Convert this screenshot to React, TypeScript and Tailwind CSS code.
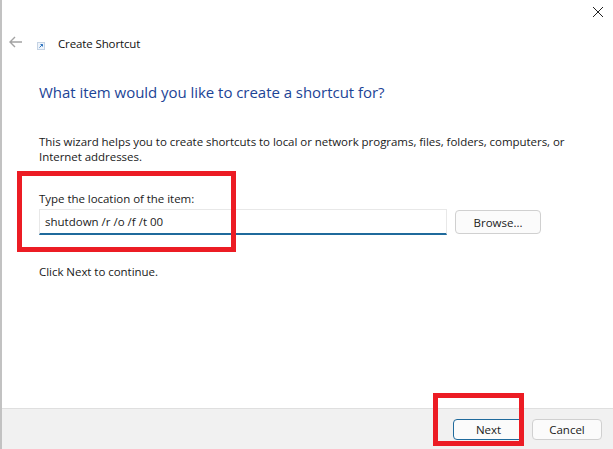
import React from "react";

export default function App() {
  return (
    <div className="relative w-[613px] h-[449px] overflow-hidden bg-white font-['Open_Sans','Noto_Sans',sans-serif] text-[12px] leading-[15px] text-[#1a1a1a] border-l-2 border-[#c2c2c2] flex flex-col">
      <div className="flex-1 flex flex-col">
        <div className="flex justify-end pt-[6px] pr-[9px] h-[30px]">
          <svg width="12" height="12" viewBox="0 0 12 12">
            <path d="M1 1L11 11M11 1L1 11" stroke="#222" strokeWidth="1" fill="none" />
          </svg>
        </div>
        <div className="flex items-center h-[26px] pl-[6px]">
          <svg width="16" height="14" viewBox="0 0 16 14" className="mt-[-2px]">
            <path d="M14 7H2M7 2L2 7L7 12" stroke="#a3a3a3" strokeWidth="1.4" fill="none" />
          </svg>
          <svg width="8" height="8" viewBox="0 0 8 8" className="ml-[13px] mt-[5px]">
            <rect x="0.5" y="0.5" width="7" height="7" fill="#eef4fb" stroke="#c5d3e4" />
            <path d="M2.5 5.5L5.5 2.5M3.5 2.5H5.5V4.5" stroke="#2f75c0" strokeWidth="1" fill="none" />
          </svg>
          <span className="ml-[13px] text-[11.5px] tracking-[-0.12px] text-[#111]">Create Shortcut</span>
        </div>
        <h1 className="ml-[37px] mt-[25px] text-[15px] leading-[22px] font-normal text-[#1c4496] tracking-[-0.04px]">
          What item would you like to create a shortcut for?
        </h1>
        <p className="ml-[37px] mt-[31px] w-[530px] text-[11.5px] tracking-[-0.04px]">
          This wizard helps you to create shortcuts to local or network programs, files, folders, computers, or Internet addresses.
        </p>
        <label className="block ml-[37px] mt-[27px] text-[11.5px] tracking-[-0.04px]">Type the location of the item:</label>
        <div className="ml-[37px] mt-[3px] flex items-start gap-[8px]">
          <div className="w-[408px] h-[26px] border border-[#e8e8e8] border-b-2 border-b-[#1f6a9c] pl-[5px] flex items-center text-[11.5px]">
            shutdown /r /o /f /t 00
          </div>
          <button className="w-[86px] h-[24px] mt-[1px] rounded-[4px] border border-[#d0d0d0] bg-[#fbfbfb] text-[11.5px] text-[#1a1a1a]">
            Browse...
          </button>
        </div>
        <p className="ml-[37px] mt-[29px] text-[11.5px] tracking-[-0.04px]">Click Next to continue.</p>
      </div>
      <div className="h-[41px] bg-[#f1f1f1] border-t border-[#dfdfdf] flex justify-end gap-[8px] pt-[10px] pr-[11px]">
        <button className="w-[71px] h-[21px] rounded-[4px] border border-[#1f6a9c] bg-[#fbfbfb] text-[11.5px] text-[#1a1a1a]">
          Next
        </button>
        <button className="w-[70px] h-[21px] rounded-[4px] border border-[#d0d0d0] bg-[#fbfbfb] text-[11.5px] text-[#1a1a1a]">
          Cancel
        </button>
      </div>
      <div className="absolute left-[15px] top-[171px] w-[219px] h-[81px] border-[5px] border-[#ec1c24]" />
      <div className="absolute left-[431px] top-[393px] w-[91px] h-[53px] border-[5px] border-[#ec1c24]" />
    </div>
  );
}
